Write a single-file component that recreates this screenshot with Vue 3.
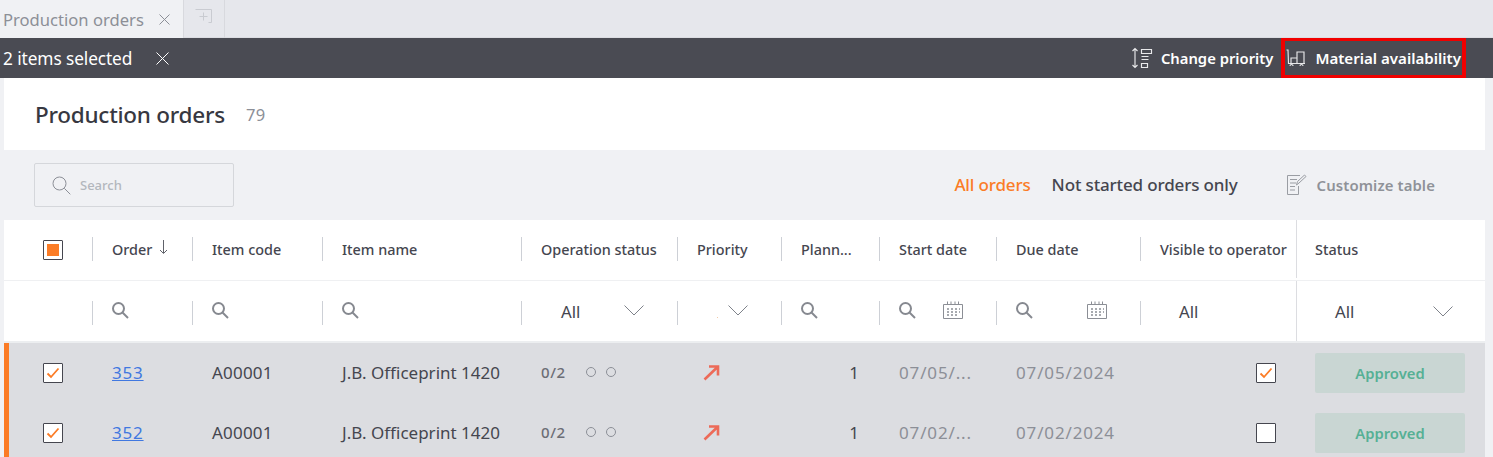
<script setup>
const heads = [
  { t: 'Order', sort: true },
  { t: 'Item code' },
  { t: 'Item name' },
  { t: 'Operation status' },
  { t: 'Priority' },
  { t: 'Plann...' },
  { t: 'Start date' },
  { t: 'Due date' },
  { t: 'Visible to operator' },
]
const rows = [
  { id: '353', start: '07/05/...', due: '07/05/2024', vis: true },
  { id: '352', start: '07/02/...', due: '07/02/2024', vis: false },
]
</script>

<template>
  <div class="page">
    <div class="tabs">
      <div class="tab-active">
        <span>Production orders</span>
        <svg class="tab-x" width="13" height="13" viewBox="0 0 13 13"><path d="M1.5 1.5l10 10M11.5 1.5l-10 10" /></svg>
      </div>
      <div class="tab-add">
        <svg width="18" height="16" viewBox="0 0 18 16"><path d="M.5 1.5h16v13h-3M8.500 4.500v8M4.500 8.500h8" /></svg>
      </div>
    </div>

    <div class="actionbar">
      <span class="selected">2 items selected</span>
      <svg class="close" width="13" height="13" viewBox="0 0 13 13"><path d="M.5.5l12 12M12.500.5l-12 12" /></svg>
      <div class="actions">
        <div class="action">
          <svg width="22" height="22" viewBox="0 0 22 22"><path d="M4 1.500v19M1.500 4L4 1.500 6.500 4M1.500 18L4 20.500 6.500 18M10.500 2.500h10v4h-10zM10.500 9.500h7M10.500 12.500h7M10.500 16.500h6v4h-6z" /></svg>
          <span>Change priority</span>
        </div>
        <div class="action highlighted">
          <svg width="20" height="18" viewBox="0 0 20 18"><path d="M.5 1h1.500l.5 13.500h16.500M5 9h6v5.500H5zM11 3h7v11.500h-7zM4 17a1.500 1.500 0 0 1 3 0M14 17a1.500 1.500 0 0 1 3 0" /></svg>
          <span>Material availability</span>
        </div>
      </div>
    </div>

    <main class="sheet">
      <div class="title-row">
        <h1>Production orders</h1>
        <span class="count">79</span>
      </div>

      <div class="toolbar">
        <div class="search">
          <svg width="19" height="19" viewBox="0 0 19 19"><circle cx="7.500" cy="7.500" r="6.500" /><path d="M12.300 12.300l6 6" /></svg>
          <span>Search</span>
        </div>
        <div class="filters">
          <span class="filter-on">All orders</span>
          <span class="filter">Not started orders only</span>
          <div class="customize">
            <svg width="20" height="21" viewBox="0 0 20 21"><path d="M13 1.500H.5v19h11V12M3 5.500h7M3 9h6M3 12.500h5M3 16h5M9.500 11l1-3.500 7-6.500 1.500 1.500-7 6.500z" /></svg>
            <span>Customize table</span>
          </div>
        </div>
      </div>

      <div class="grid head-row">
        <div class="cell check-cell"><span class="box"><i class="box-fill"></i></span></div>
        <div v-for="h in heads" :key="h.t" class="cell">
          <div class="in">
            <span>{{ h.t }}</span>
            <svg v-if="h.sort" class="sort" width="9" height="15" viewBox="0 0 9 15"><path d="M4.500 0v13M1 10l3.500 3.500L8 10" /></svg>
          </div>
        </div>
        <div class="cell status-cell"><span class="status-label">Status</span></div>
      </div>

      <div class="grid filter-row">
        <div class="cell check-cell"></div>
        <div v-for="n in 3" :key="n" class="cell"><div class="in"><svg class="mag" width="17" height="17" viewBox="0 0 17 17"><circle cx="6.500" cy="6.500" r="5.500" /><path d="M10.500 10.500l5.500 5.500" /></svg></div></div>
        <div class="cell"><div class="in select"><span class="all">All</span><svg class="chev" width="20" height="11" viewBox="0 0 20 11"><path d="M.5.500L10 10 19.500.500" /></svg></div></div>
        <div class="cell"><div class="in select narrow"><i class="speck"></i><svg class="chev" width="20" height="11" viewBox="0 0 20 11"><path d="M.5.500L10 10 19.500.500" /></svg></div></div>
        <div class="cell"><div class="in"><svg class="mag" width="17" height="17" viewBox="0 0 17 17"><circle cx="6.500" cy="6.500" r="5.500" /><path d="M10.500 10.500l5.500 5.500" /></svg></div></div>
        <div v-for="n in 2" :key="'d' + n" class="cell">
          <div class="in date">
            <svg class="mag" width="17" height="17" viewBox="0 0 17 17"><circle cx="6.500" cy="6.500" r="5.500" /><path d="M10.500 10.500l5.500 5.500" /></svg>
            <svg class="cal" width="20" height="18" viewBox="0 0 20 18"><path d="M.5 3.500h19v14H.5zM4.500 .500v3M8 .500v3M12 .500v3M15.500 .500v3" /><path class="dots" d="M4 8h2M8 8h2M12 8h2M16 8h1M4 11h2M8 11h2M12 11h2M16 11h1M4 14h2M8 14h2M12 14h2" /></svg>
          </div>
        </div>
        <div class="cell"><div class="in"><span class="all vis-all">All</span></div></div>
        <div class="cell status-cell status-select"><span class="all">All</span><svg class="chev" width="20" height="11" viewBox="0 0 20 11"><path d="M.5.500L10 10 19.500.500" /></svg></div>
      </div>

      <div v-for="r in rows" :key="r.id" class="grid data-row">
        <div class="cell check-cell">
          <span class="box checked"><svg width="14" height="12" viewBox="0 0 14 12"><path d="M1.500 6.500l3.500 3.500 7.500-8.500" /></svg></span>
        </div>
        <div class="cell pad"><a class="link txt">{{ r.id }}</a></div>
        <div class="cell pad"><span class="txt code">A00001</span></div>
        <div class="cell pad"><span class="txt">J.B. Officeprint 1420</span></div>
        <div class="cell pad op">
          <b>0/2</b>
          <i class="dot first"></i><i class="dot"></i>
        </div>
        <div class="cell prio">
          <svg width="17" height="16" viewBox="0 0 17 16"><path d="M1.500 14.500L14.500 2M6 1.500h9v9" /></svg>
        </div>
        <div class="cell qty"><span class="txt">1</span></div>
        <div class="cell pad"><span class="txt muted">{{ r.start }}</span></div>
        <div class="cell pad"><span class="txt muted">{{ r.due }}</span></div>
        <div class="cell vis-cell">
          <span class="box" :class="{ checked: r.vis }">
            <svg v-if="r.vis" width="14" height="12" viewBox="0 0 14 12"><path d="M1.500 6.500l3.500 3.500 7.500-8.500" /></svg>
          </span>
        </div>
        <div class="cell badge-cell"><span class="badge">Approved</span></div>
      </div>
    </main>
  </div>
</template>

<style>
html, body { margin: 0; overflow: hidden; background: #f0f1f4; }
</style>

<style scoped>
.page {
  width: 1493px;
  height: 457px;
  overflow: hidden;
  background: #f0f1f4;
  font-family: "Noto Sans", "Open Sans", sans-serif;
  color: #45464f;
  position: relative;
}
svg { fill: none; stroke-width: 1; display: block; }

.tabs { display: flex; height: 38px; background: #e6e7ec; box-shadow: inset 0 -1px 0 #dcdde2; }
.tab-active {
  width: 184px; box-sizing: border-box; padding-left: 3px; display: flex; align-items: center;
  background: #f0f1f4; border-right: 1px solid #d8d9de;
  font-size: 16.600px; color: #8c8f97;
}
.tab-x { margin-left: 14px; stroke: #8c8f97; }
.tab-add {
  width: 41px; box-sizing: border-box; display: flex; align-items: center; justify-content: center;
  border-right: 1px solid #d8d9de; padding-bottom: 6px;
}
.tab-add svg { stroke: #c9cbd1; }

.actionbar { height: 40px; background: #4a4b53; color: #fff; display: flex; align-items: center; padding-left: 3px; }
.selected { font-size: 17.300px; letter-spacing: -.1px; }
.close { margin-left: 24px; stroke: #fff; }
.actions { margin-left: auto; display: flex; align-items: center; margin-right: 32px; }
.action { display: flex; align-items: center; font-size: 14.800px; font-weight: 600; color: #fff; }
.action svg { stroke: #e8e8ea; stroke-width: 1.150; }
.action span { margin-left: 8px; }
.highlighted { margin-left: 13px; height: 40px; position: relative; font-size: 15.100px; }
.highlighted span { margin-left: 9px; }
.highlighted::after {
  content: ""; position: absolute; left: -5px; right: -5px; top: 0; bottom: 0;
  border: 4px solid #f00000; border-width: 3px 4px;
}

.sheet { margin: 0 8px 0 4px; }
.title-row { height: 72px; background: #fff; display: flex; align-items: center; padding-left: 31px; box-sizing: border-box; }
h1 { margin: 0; font-size: 22.500px; font-weight: 500; color: #373841; letter-spacing: -.25px; }
.count { margin-left: 21px; font-size: 16.500px; color: #8c8f97; letter-spacing: .4px; }

.toolbar { height: 70px; background: #f0f1f4; display: flex; align-items: center; padding-left: 30px; }
.search {
  width: 200px; height: 44px; box-sizing: border-box; border: 1px solid #d5d7db; border-radius: 2px;
  display: flex; align-items: center; padding-left: 17px; font-size: 13px; font-weight: 500; color: #b3b7bd;
}
.search svg { stroke: #8c8f97; margin-right: 9px; }
.filters { margin-left: auto; display: flex; align-items: center; font-size: 17px; font-weight: 500; letter-spacing: -.15px; padding-bottom: 2px; }
.filter-on { color: #fb7c26; }
.filter { margin-left: 21px; color: #45464f; }
.customize { margin-left: 49px; margin-right: 50px; display: flex; align-items: center; color: #8f9298; font-size: 14.900px; font-weight: 600; letter-spacing: .1px; padding-top: 2px; }
.customize svg { stroke: #9a9da3; margin-right: 10px; margin-top: -2px; }

.grid { display: grid; grid-template-columns: 88px 100px 130px 199px 156px 104px 98px 117px 144px 156px 189px; background: #fff; }
.cell { display: flex; align-items: center; min-width: 0; white-space: nowrap; }
.check-cell { padding-left: 39px; }
.head-row { height: 61px; border-bottom: 1px solid #eff0f2; box-sizing: border-box; font-size: 14.400px; font-weight: 500; color: #45464f; padding-bottom: 2px; }
.head-row .box { margin-top: 2px; }
.filter-row { height: 62px; box-sizing: border-box; border-bottom: 2px solid #eceef0; }
.in { height: 24px; flex: 1; display: flex; align-items: center; border-left: 1px solid #cdd0d6; padding-left: 19px; box-sizing: border-box; }
.filter-row .in { margin-top: 3px; align-items: flex-start; }
.sort { margin-left: 7px; margin-top: -4px; stroke: #60626a; }
.mag { stroke: #868990; stroke-width: 2; margin-top: 1px; }
.select { align-items: center !important; padding-left: 39px; padding-right: 33px; justify-content: space-between; }
.select .chev { margin-bottom: 4px; }
.select .all { margin-bottom: 3px; }
.select.narrow { padding-left: 39px; }
.speck { width: 1px; height: 1px; background: #f0c9a8; margin-top: 9px; }
.all { font-size: 16.800px; color: #45464f; }
.chev { stroke: #7e828a; }
.date { padding-right: 33px; justify-content: space-between; }
.cal { stroke: #8b8e95; margin-top: 0; }
.dots { stroke-width: 1.600; stroke: #8b8e95; }
.vis-all { margin-left: 19px; margin-top: -1px; }
.status-cell { border-left: 1px solid #dcdde1; padding-left: 18px; }
.status-select { padding-left: 38px; padding-right: 32px; justify-content: space-between; }

.box {
  width: 20px; height: 20px; box-sizing: border-box; border: 1px solid #45464f; border-radius: 1px; background: #fff;
  display: flex; align-items: center; justify-content: center;
}
.box-fill { width: 12px; height: 12px; background: #fb7c26; }
.box svg { stroke: #fb7c26; stroke-width: 1.800; }

.data-row {
  height: 60px; font-size: 17px; color: #45464f; background: #dcdde1; box-sizing: border-box;
  border-left: 5px solid #fb7c26;
  grid-template-columns: 83px 100px 130px 199px 156px 104px 98px 117px 144px 156px 189px;
}
.data-row .check-cell { padding-left: 34px; }
.txt { margin-top: -2px; }
.pad { padding-left: 20px; }
.code { letter-spacing: .2px; }
.link { color: #4178e0; text-decoration: underline; letter-spacing: .8px; }
.op b { font-size: 15px; font-weight: 500; color: #6c6e76; letter-spacing: .6px; margin-top: -2px; }
.dot { width: 10px; height: 10px; box-sizing: border-box; border: 1px solid #8c8f97; border-radius: 50%; margin-left: 10px; margin-top: -2px; }
.dot.first { margin-left: 20px; }
.prio { padding-left: 26px; }
.prio svg { stroke: #ec6a58; stroke-width: 2.600; margin-top: -1px; }
.qty { justify-content: flex-end; padding-right: 20px; }
.muted { color: #8c8f97; letter-spacing: .85px; }
.vis-cell { justify-content: flex-end; padding-right: 20px; }
.badge-cell { padding-left: 19px; }
.badge {
  width: 150px; height: 40px; border-radius: 2px; background: #c9d6d3; color: #56b095;
  display: flex; align-items: center; justify-content: center; font-size: 14.800px; font-weight: 600;
}
</style>
